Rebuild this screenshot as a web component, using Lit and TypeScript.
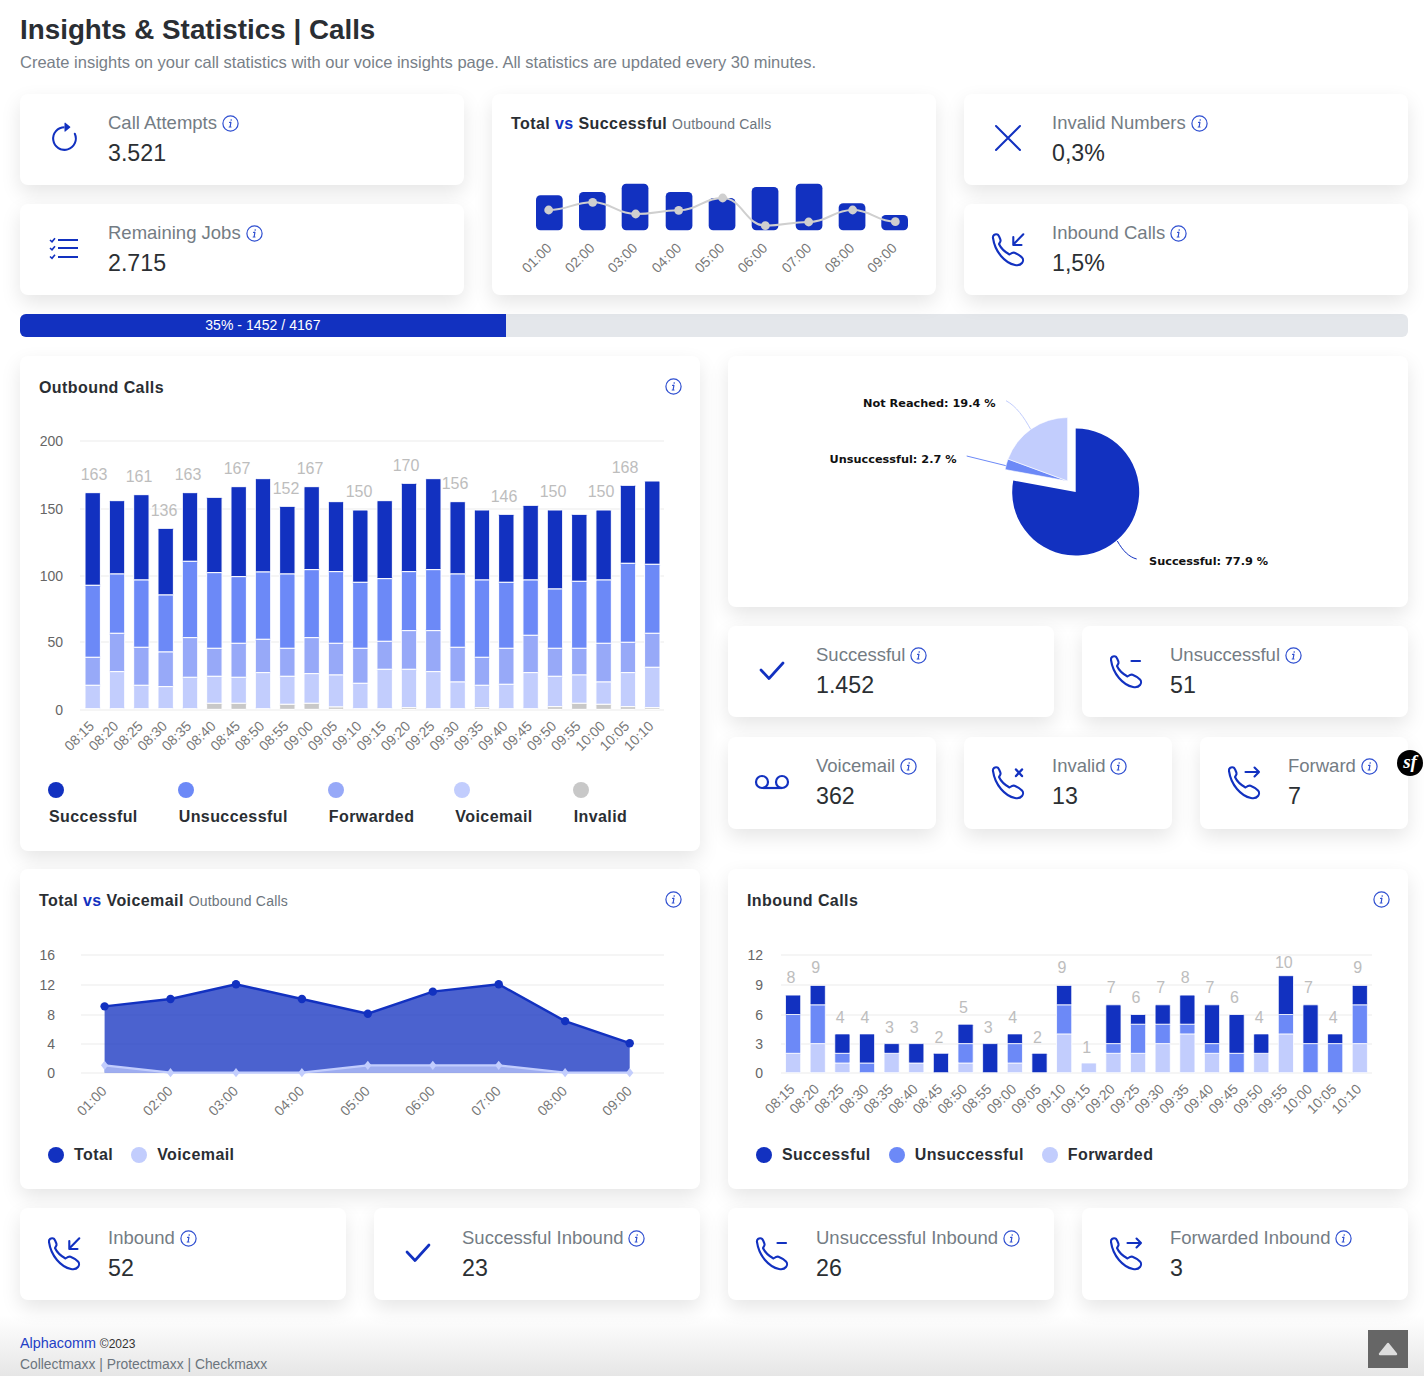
import { LitElement, html, svg, css } from "lit";
import { customElement } from "lit/decorators.js";

const C = { dark: "#1231c0", mid: "#6c89f7", fwd: "#97a9f8", vm: "#c2cdfd", inv: "#c8c8c8" };
const MAIN_LABELS: string[] = [];
for (let m = 8 * 60 + 15; m <= 10 * 60 + 10; m += 5) {
  MAIN_LABELS.push(`${String(Math.floor(m / 60)).padStart(2, "0")}:${String(m % 60).padStart(2, "0")}`);
}
const HOURS = ["01:00", "02:00", "03:00", "04:00", "05:00", "06:00", "07:00", "08:00", "09:00"];

// boundaries measured in 3x crop space: top, dark/mid, mid/fwd, fwd/vm, vm/gray
const MAIN: number[][] = [
  [203, 481, 697, 781], [227, 447, 625, 740], [209, 465, 667, 781], [310, 510, 681, 785],
  [203, 409, 638, 757], [217, 443, 670, 754, 835], [185, 455, 655, 757, 835], [161, 441, 643, 743],
  [244, 447, 670, 754, 838], [185, 434, 638, 746, 835], [230, 440, 655, 750, 846], [255, 472, 670, 775],
  [227, 461, 649, 733], [175, 440, 617, 733, 848], [161, 434, 617, 740], [230, 447, 667, 771],
  [255, 465, 697, 781, 848], [268, 472, 670, 778], [241, 465, 631, 743], [255, 492, 670, 754, 845],
  [268, 469, 670, 750, 835], [255, 465, 655, 771, 838], [181, 415, 652, 743, 845], [168, 418, 625, 727, 848],
];
const MAIN_TOTALS: [string, number, number][] = [
  ["163", 94, 480], ["161", 139, 482], ["136", 164, 516], ["163", 188, 480], ["167", 237, 474], ["152", 286, 494],
  ["167", 310, 474], ["150", 359, 497], ["170", 406, 471], ["156", 455, 489], ["146", 504, 502], ["150", 553, 497],
  ["150", 601, 497], ["168", 625, 473],
];
// forwarded, unsuccessful, successful
const INBOUND: number[][] = [
  [2, 4, 2], [3, 4, 2], [1, 1, 2], [0, 1, 3], [2, 0, 1], [1, 0, 2], [0, 0, 2], [1, 2, 2],
  [0, 0, 3], [1, 2, 1], [0, 0, 2], [4, 3, 2], [1, 0, 0], [2, 1, 4], [2, 3, 1], [3, 2, 2],
  [4, 1, 3], [2, 1, 4], [0, 2, 4], [2, 0, 2], [4, 2, 4], [0, 3, 4], [0, 3, 1], [3, 4, 2],
];

const PHONE = "M8 12C7.5 9.5 10 7.5 12.5 8.5C14 9 14.8 12 15.5 14C16 15.8 14.5 16.5 14 18C16 22.5 20 26 24.5 28.5C26 27.5 27.5 26 29.5 26.8C32 27.8 35.5 30 37 31.5C38.5 33 38.3 35.5 37 37C35.5 39 33 39.6 30 39C20 37 10 26 8 12Z";

function phoneIcon(extra: unknown) {
  return html`<svg class="ic" width="32" height="32" viewBox="7 7 32 32" fill="none" stroke="${C.dark}" stroke-width="2.1" stroke-linecap="round" stroke-linejoin="round">
    <path d="${PHONE}" />${extra}
  </svg>`;
}

const ICONS: Record<string, () => unknown> = {
  refresh: () => html`<svg class="ic up" width="33" height="33" viewBox="0 0 16 16" fill="${C.dark}">
    <path d="M8 3a5 5 0 1 0 4.546 2.914.5.5 0 0 1 .908-.417A6 6 0 1 1 8 2v1z" />
    <path d="M8 4.466V.534a.25.25 0 0 1 .41-.192l2.36 1.966c.12.1.12.284 0 .384L8.41 4.658A.25.25 0 0 1 8 4.466z" />
  </svg>`,
  list: () => html`<svg class="ic up" width="30" height="24" viewBox="0 0 30 24" fill="none" stroke="${C.dark}" stroke-width="2">
    <path d="M9 4h20M9 12h20M9 21h20" />
    <g stroke-width="1.6"><path d="M1 4l2 1.8 3-3.6" /><path d="M1 12l2 1.8 3-3.6" /><path d="M1 20.5l2 1.8 3-3.6" /></g>
  </svg>`,
  x: () => html`<svg class="ic up" width="28" height="28" viewBox="0 0 28 28" fill="none" stroke="${C.dark}" stroke-width="2" stroke-linecap="round">
    <path d="M2 2l24 24M26 2L2 26" />
  </svg>`,
  check: () => html`<svg class="ic" width="26" height="20" viewBox="0 0 26 20" fill="none" stroke="${C.dark}" stroke-width="2.7" stroke-linecap="round" stroke-linejoin="round">
    <path d="M2 9l8 8.5L24 2" />
  </svg>`,
  voicemail: () => html`<svg class="ic" width="34" height="16" viewBox="0 0 34 16" fill="none" stroke="${C.dark}" stroke-width="2.2">
    <circle cx="7" cy="8" r="6" /><circle cx="27" cy="8" r="6" /><path d="M7 14h20" />
  </svg>`,
  inbound: () => phoneIcon(svg`<path d="M38.3 8.3L28.3 18.5M28.3 11V19H36.5" />`),
  minus: () => phoneIcon(svg`<path d="M28.5 13H37" stroke-width="2.2" />`),
  invalid: () => phoneIcon(svg`<path d="M31 10.5l6 6.5M37 10.5l-6 6.5" stroke-width="2.4" />`),
  forward: () => phoneIcon(svg`<path d="M24.5 13H38M33.5 8.5l4.5 4.5-4.5 4.5" />`),
};

const info = () => html`<svg class="info" width="17" height="17" viewBox="0 0 17 17" fill="none" stroke="#2f4fd0">
  <circle cx="8.5" cy="8.5" r="7.6" stroke-width="1.2" />
  <path d="M8.9 7.4l-.8 4.6M7.6 7.4h1.2M7.2 12h1.8" stroke-width="1.2" stroke-linecap="round" />
  <circle cx="9.2" cy="5" r=".8" fill="#2f4fd0" stroke="none" />
</svg>`;

function stat(icon: string, label: string, value: string) {
  return html`<div class="card stat">
    <div class="stat-icon">${ICONS[icon]()}</div>
    <div>
      <div class="stat-label"><span>${label}</span>${info()}</div>
      <div class="stat-value">${value}</div>
    </div>
  </div>`;
}

function grid(x1: number, x2: number, ticks: [number, string][], labelX: number) {
  return ticks.map(
    ([y, t]) => svg`<line x1="${x1}" x2="${x2}" y1="${y}" y2="${y}" stroke="#ececec" stroke-width="1.2" />
      <text class="ytick" x="${labelX}" y="${y + 5}" text-anchor="end">${t}</text>`
  );
}

function xLabel(x: number, y: number, t: string) {
  return svg`<text class="xtick" x="${x}" y="${y}" text-anchor="end" transform="rotate(-45 ${x} ${y})">${t}</text>`;
}

function mainChart() {
  const py = (v: number) => 425 + v / 3;
  const bars = MAIN.map((b, i) => {
    const x = 85 + i * 24.33;
    const w = 15.4;
    const end = b[4] !== undefined ? b[4] : 851;
    const segs: [number, number, string][] = [
      [b[0], b[1], C.dark], [b[1], b[2], C.mid], [b[2], b[3], C.fwd], [b[3], end, C.vm],
    ];
    if (b[4] !== undefined) segs.push([b[4], 853, C.inv]);
    return segs.map(
      ([t, e, c]) => svg`<rect x="${x}" y="${py(t)}" width="${w}" height="${py(e) - py(t)}" rx="1" fill="${c}" stroke="#fff" stroke-width="1" />`
    );
  });
  return html`<svg class="chart" width="680" height="373" viewBox="20 399 680 373">
    ${grid(80, 664, [[441, "200"], [509, "150"], [576, "100"], [642, "50"], [710, "0"]], 63)}
    ${bars}
    ${MAIN_TOTALS.map(([t, x, y]) => svg`<text class="dlabel" x="${x}" y="${y}" text-anchor="middle">${t}</text>`)}
    ${MAIN_LABELS.map((t, i) => xLabel(85 + i * 24.33 + 10, 727, t))}
  </svg>`;
}

function miniChart() {
  const xs = [536, 579, 621.7, 665.7, 708.7, 751.7, 795.7, 838.7, 881.3];
  const tops = [195.3, 192, 183.7, 192, 198, 187, 183.7, 203.3, 215];
  const lx = [206, 338, 467, 596, 728, 856, 986, 1118, 1246].map((v) => 480 + v / 3);
  const ly = [375, 352, 387, 376, 339, 422, 411, 375, 410].map((v) => 85 + v / 3);
  let d = `M${lx[0]} ${ly[0]}`;
  for (let i = 1; i < lx.length; i++) {
    const k = (lx[i] - lx[i - 1]) * 0.45;
    d += ` C${lx[i - 1] + k} ${ly[i - 1]} ${lx[i] - k} ${ly[i]} ${lx[i]} ${ly[i]}`;
  }
  return html`<svg class="chart" width="444" height="160" viewBox="492 135 444 160">
    ${xs.map((x, i) => svg`<rect x="${x}" y="${tops[i]}" width="26.7" height="${230.3 - tops[i]}" rx="4.5" fill="${C.dark}" />`)}
    <path d="${d}" fill="none" stroke="#cfcfcf" stroke-width="2" />
    ${lx.map((x, i) => svg`<circle cx="${x}" cy="${ly[i]}" r="4.4" fill="#cfcfcf" />`)}
    ${HOURS.map((t, i) => xLabel(xs[i] + 16.5, 249, t))}
  </svg>`;
}

function pieChart() {
  const pt = (cx: number, cy: number, r: number, a: number) => {
    const t = (a * Math.PI) / 180;
    return `${cx + r * Math.sin(t)} ${cy - r * Math.cos(t)}`;
  };
  const sector = (cx: number, cy: number, r: number, a: number, b: number) =>
    `M${cx} ${cy} L${pt(cx, cy, r, a)} A${r} ${r} 0 ${b - a > 180 ? 1 : 0} 1 ${pt(cx, cy, r, b)} Z`;
  const cx = 1075.7, cy = 492, ex = 1067.6, ey = 481, r = 63.5;
  return html`<svg class="chart" width="680" height="251" viewBox="728 356 680 251">
    <path d="M1031 430 C1024 417 1016 406 1006 400.7" fill="none" stroke="${C.vm}" />
    <path d="M1006 465.7 L966.7 456" fill="none" stroke="${C.mid}" />
    <path d="M1117.3 541 C1123 551 1129 557 1136.7 559" fill="none" stroke="${C.dark}" />
    <path d="${sector(cx, cy, r, 0, 280.4)}" fill="${C.dark}" />
    <path d="${sector(ex, ey, r, 280.4, 290.2)}" fill="${C.mid}" stroke="#fff" stroke-width=".6" />
    <path d="${sector(ex, ey, r, 290.2, 360)}" fill="${C.vm}" stroke="#fff" stroke-width=".6" />
    <text class="plabel" x="863" y="407">Not Reached: 19.4 %</text>
    <text class="plabel" x="829.5" y="463">Unsuccessful: 2.7 %</text>
    <text class="plabel" x="1149" y="565">Successful: 77.9 %</text>
  </svg>`;
}

function areaChart() {
  const xs = [104.6, 170.5, 236, 301.9, 367.8, 432.8, 498.7, 565.1, 629.7];
  const y = (v: number) => 1072.7 - v * 7.37;
  const total = [9, 10, 12, 10, 8, 11, 12, 7, 4];
  const vm = [1, 0, 0, 0, 1, 1, 1, 0, 0];
  const line = (a: number[]) => a.map((v, i) => `${i ? "L" : "M"}${xs[i]} ${y(v)}`).join(" ");
  const area = (a: number[]) => `${line(a)} L${xs[8]} ${y(0)} L${xs[0]} ${y(0)} Z`;
  return html`<svg class="chart" width="680" height="223" viewBox="20 912 680 223">
    ${grid(81, 664, [[955, "16"], [985, "12"], [1015, "8"], [1044, "4"], [1073, "0"]], 55)}
    <path d="${area(total)}" fill="${C.dark}" fill-opacity=".76" />
    <path d="${line(total)}" fill="none" stroke="${C.dark}" stroke-width="2.4" />
    <path d="${area(vm)}" fill="${C.vm}" fill-opacity=".7" />
    <path d="${line(vm)}" fill="none" stroke="${C.vm}" stroke-width="2.2" />
    ${total.map((v, i) => svg`<circle cx="${xs[i]}" cy="${y(v)}" r="4.2" fill="${C.dark}" />`)}
    ${vm.map((v, i) => svg`<path d="M${xs[i]} ${y(v) - 4.6}l3.6 4.6-3.6 4.6-3.6-4.6z" fill="${C.vm}" />`)}
    ${HOURS.map((t, i) => xLabel(xs[i] + 3, 1092, t))}
  </svg>`;
}

function inboundChart() {
  const U = 9.7;
  const y = (v: number) => 1072.7 - v * U;
  const bars = INBOUND.map((d, i) => {
    const x = 785.5 + i * 24.64;
    let acc = 0;
    const cols = [C.vm, C.mid, C.dark];
    const rects = d.map((v, k) => {
      if (!v) return null;
      const r = svg`<rect x="${x}" y="${y(acc + v)}" width="15.2" height="${v * U}" rx="1" fill="${cols[k]}" stroke="#fff" stroke-width=".8" />`;
      acc += v;
      return r;
    });
    const labelY = Math.max(962, 1057 - 10 * acc) + 6;
    return svg`${rects}<text class="dlabel" x="${x + 5.5}" y="${labelY}" text-anchor="middle">${acc}</text>`;
  });
  return html`<svg class="chart" width="680" height="223" viewBox="728 912 680 223">
    ${grid(781, 1372, [[955, "12"], [985, "9"], [1015, "6"], [1044, "3"], [1073, "0"]], 763)}
    ${bars}
    ${MAIN_LABELS.map((t, i) => xLabel(785.5 + i * 24.64 + 10, 1090, t))}
  </svg>`;
}

@customElement("app-root")
export class AppRoot extends LitElement {
  static styles = css`
    :host {
      display: block;
      position: relative;
      box-sizing: border-box;
      width: 1424px;
      height: 1376px;
      overflow: hidden;
      padding: 12px 16px 0 20px;
      background: #fff;
      font-family: "Liberation Sans", Arial, sans-serif;
      color: #212529;
    }
    * { box-sizing: border-box; }
    h1 { margin: 0; font-size: 27.8px; line-height: 36px; font-weight: 700; color: #2a2e33; }
    .sub { margin: 3px 0 21px; font-size: 16.5px; line-height: 22px; color: #788088; }
    .card {
      background: #fff;
      border-radius: 8px;
      box-shadow: 0 8px 20px rgba(0, 0, 0, 0.1);
    }
    .top { display: grid; grid-template-columns: repeat(3, 444px); gap: 28px; }
    .stack { display: flex; flex-direction: column; gap: 19px; }
    .stat { display: flex; height: 91px; padding-top: 17px; }
    .stat-icon { width: 88px; flex: none; display: flex; align-items: center; justify-content: center; height: 56px; }
    .ic { display: block; overflow: visible; }
    .up { margin-top: -2px; }
    .stat-label { display: flex; align-items: center; gap: 5px; font-size: 18.5px; line-height: 24px; color: #747c84; }
    .info { display: block; flex: none; }
    .stat-value { margin-top: 4px; font-size: 23.2px; line-height: 28px; color: #2b2f33; }
    .progress { height: 23px; margin-top: 19px; border-radius: 6px; background: #e4e7eb; overflow: hidden; }
    .bar {
      width: 35%;
      height: 100%;
      background: #1231c0;
      color: #fff;
      font-size: 14px;
      letter-spacing: 0.05px;
      line-height: 23px;
      text-align: center;
    }
    .two { display: grid; grid-template-columns: 680px 680px; gap: 28px; align-items: start; }
    .row3 { margin-top: 19px; }
    .row4 { margin-top: 18px; }
    .row5 { margin-top: 19px; display: grid; grid-template-columns: repeat(4, 326px); gap: 28px; }
    .row5 .stat { height: 92px; padding-top: 18px; }
    .row5 .stat-icon { margin-top: -1px; }
    .panel { display: block; }
    .main { height: 495px; }
    .bottom { height: 320px; }
    .mini { height: 201px; }
    .head { display: flex; justify-content: space-between; align-items: center; padding: 21px 19px 0; }
    .head .info { margin: -3px -1px 0 0; }
    .mini .head { padding-top: 19px; }
    .title { font-size: 16px; line-height: 22px; font-weight: 700; letter-spacing: 0.42px; color: #2a2e33; }
    .title b { color: #1231c0; }
    .title small { font-size: 14px; font-weight: 400; letter-spacing: 0.2px; color: #6c757d; }
    .chart { display: block; }
    .ytick { font-size: 14px; fill: #666; }
    .xtick { font-size: 14px; fill: #777; }
    .dlabel { font-size: 16px; fill: #bdbdbd; }
    .plabel { font-family: "DejaVu Sans", sans-serif; font-size: 11.3px; font-weight: 700; fill: #111; }
    .rcol { display: flex; flex-direction: column; }
    .pie { height: 251px; }
    .g2 { display: grid; grid-template-columns: repeat(2, 326px); gap: 28px; margin-top: 19px; }
    .g3 { display: grid; grid-template-columns: repeat(3, 208px); gap: 28px; margin-top: 20px; }
    .g3 .stat { height: 92px; }
    .legend { display: flex; font-size: 16px; line-height: 20px; font-weight: 700; letter-spacing: 0.42px; color: #2a2e33; }
    .dot { display: block; width: 16px; height: 16px; border-radius: 50%; flex: none; }
    .legend.col { gap: 41px; margin-top: 10px; padding-left: 29px; }
    .col .item { display: flex; flex-direction: column; gap: 9px; }
    .col .dot { margin-left: -1px; }
    .legend.line { margin-top: 10px; padding-left: 28px; gap: 18px; }
    .line .item { display: flex; align-items: center; gap: 10px; }
    .footer {
      position: relative;
      margin: 0 -16px 0 -20px;
      height: 76px;
      padding: 33px 0 0 20px;
      font-size: 13.85px;
      line-height: 20px;
      color: #6c757d;
      background: linear-gradient(to bottom, rgba(230, 230, 230, 0) 20%, #e6e6e6 100%);
    }
    .footer a { color: #1f3fc6; font-size: 14.4px; text-decoration: none; }
    .footer small { font-size: 12px; color: #333; }
    .totop {
      position: absolute;
      right: 16px;
      bottom: 8px;
      width: 40px;
      height: 38px;
      background: #666;
      display: flex;
      align-items: center;
      justify-content: center;
    }
    .sf {
      position: absolute;
      left: 1397px;
      top: 750px;
      width: 26px;
      height: 26px;
      border-radius: 50%;
      background: #000;
      color: #fff;
      font: italic 700 19px/24px "Liberation Serif", serif;
      text-align: center;
    }
  `;

  private legend(cls: string, items: [string, string][]) {
    return html`<div class="legend ${cls}">
      ${items.map(([c, t]) => html`<div class="item"><span class="dot" style="background:${c}"></span><span>${t}</span></div>`)}
    </div>`;
  }

  render() {
    return html`
      <h1>Insights &amp; Statistics | Calls</h1>
      <p class="sub">Create insights on your call statistics with our voice insights page. All statistics are updated every 30 minutes.</p>

      <div class="top">
        <div class="stack">
          ${stat("refresh", "Call Attempts", "3.521")}
          ${stat("list", "Remaining Jobs", "2.715")}
        </div>
        <div class="card panel mini">
          <div class="head"><div class="title">Total <b>vs</b> Successful <small>Outbound Calls</small></div></div>
          ${miniChart()}
        </div>
        <div class="stack">
          ${stat("x", "Invalid Numbers", "0,3%")}
          ${stat("inbound", "Inbound Calls", "1,5%")}
        </div>
      </div>

      <div class="progress"><div class="bar">35% - 1452 / 4167</div></div>

      <div class="two row3">
        <div class="card panel main">
          <div class="head"><div class="title">Outbound Calls</div>${info()}</div>
          ${mainChart()}
          ${this.legend("col", [[C.dark, "Successful"], [C.mid, "Unsuccessful"], [C.fwd, "Forwarded"], [C.vm, "Voicemail"], [C.inv, "Invalid"]])}
        </div>
        <div class="rcol">
          <div class="card panel pie">${pieChart()}</div>
          <div class="g2">
            ${stat("check", "Successful", "1.452")}
            ${stat("minus", "Unsuccessful", "51")}
          </div>
          <div class="g3">
            ${stat("voicemail", "Voicemail", "362")}
            ${stat("invalid", "Invalid", "13")}
            ${stat("forward", "Forward", "7")}
          </div>
        </div>
      </div>

      <div class="two row4">
        <div class="card panel bottom">
          <div class="head"><div class="title">Total <b>vs</b> Voicemail <small>Outbound Calls</small></div>${info()}</div>
          ${areaChart()}
          ${this.legend("line", [[C.dark, "Total"], [C.vm, "Voicemail"]])}
        </div>
        <div class="card panel bottom">
          <div class="head"><div class="title">Inbound Calls</div>${info()}</div>
          ${inboundChart()}
          ${this.legend("line", [[C.dark, "Successful"], [C.mid, "Unsuccessful"], [C.vm, "Forwarded"]])}
        </div>
      </div>

      <div class="row5">
        ${stat("inbound", "Inbound", "52")}
        ${stat("check", "Successful Inbound", "23")}
        ${stat("minus", "Unsuccessful Inbound", "26")}
        ${stat("forward", "Forwarded Inbound", "3")}
      </div>

      <div class="footer">
        <div><a>Alphacomm</a> <small>©2023</small></div>
        <div>Collectmaxx | Protectmaxx | Checkmaxx</div>
        <div class="totop">
          <svg width="20" height="14" viewBox="0 0 20 14"><path d="M10 2L18 12H2z" fill="#ddd" stroke="#ddd" stroke-width="2.4" stroke-linejoin="round" /></svg>
        </div>
      </div>
      <div class="sf">sf</div>
    `;
  }
}
